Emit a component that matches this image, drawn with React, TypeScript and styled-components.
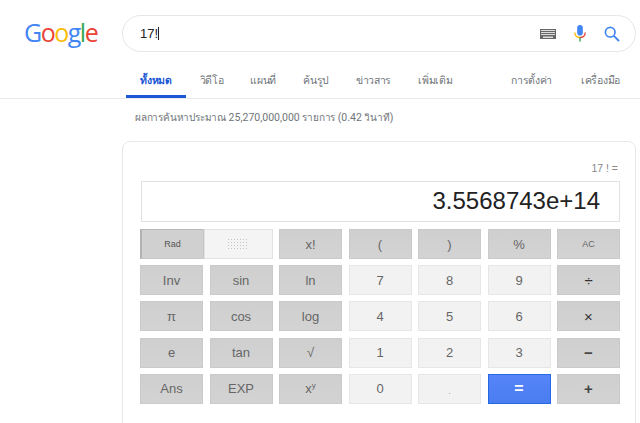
import React from 'react'
import styled, { createGlobalStyle, css } from 'styled-components'

type Tone = 'dark' | 'light' | 'blue'
type Size = 'small' | 'op' | 'heavy' | 'dot'
type Key = { label: React.ReactNode; tone: Tone; size?: Size }

const tabs = ['ทั้งหมด', 'วิดีโอ', 'แผนที่', 'ค้นรูป', 'ข่าวสาร', 'เพิ่มเติม']

const d = (label: React.ReactNode, size?: Size): Key => ({ label, tone: 'dark', size })
const l = (label: React.ReactNode, size?: Size): Key => ({ label, tone: 'light', size })

const rows: Key[][] = [
  [d('x!'), d('('), d(')'), d('%'), d('AC', 'small')],
  [d('Inv'), d('sin'), d('ln'), l('7'), l('8'), l('9'), d('÷', 'op')],
  [d('π'), d('cos'), d('log'), l('4'), l('5'), l('6'), d('×', 'op')],
  [d('e'), d('tan'), d('√'), l('1'), l('2'), l('3'), d('−', 'heavy')],
  [
    d('Ans'),
    d('EXP'),
    d(
      <span>
        x<sup>y</sup>
      </span>,
    ),
    l('0'),
    l('.', 'dot'),
    { label: '=', tone: 'blue' },
    d('+', 'heavy'),
  ],
]

const App: React.FC = () => (
  <Page>
    <GlobalStyle />
    <Header>
      <Logo>
        <Blue>G</Blue>
        <Red>o</Red>
        <Yellow>o</Yellow>
        <Blue>g</Blue>
        <Green>l</Green>
        <Red>e</Red>
      </Logo>
      <SearchBox>
        <Query>
          17!<Caret />
        </Query>
        <KeyboardIcon />
        <MicIcon />
        <SearchIcon />
      </SearchBox>
    </Header>
    <Tabs>
      {tabs.map((t, i) => (
        <Tab key={t} active={i === 0}>
          {t}
        </Tab>
      ))}
      <TabTools>
        <ToolLink>การตั้งค่า</ToolLink>
        <ToolLink>เครื่องมือ</ToolLink>
      </TabTools>
    </Tabs>
    <Stats>
      <Thai>ผลการค้นหาประมาณ</Thai> 25,270,000,000 <Thai>รายการ</Thai> (0.42 <Thai>วินาที</Thai>)
    </Stats>
    <Card>
      <Equation>17 ! =</Equation>
      <Display>3.5568743e+14</Display>
      <Keys>
        <AngleToggle>
          <RadKey>Rad</RadKey>
          <DegKey>
            <DotGrid />
          </DegKey>
        </AngleToggle>
        {rows.flat().map((k, i) => (
          <CalcKey key={i} tone={k.tone} size={k.size}>
            {k.label}
          </CalcKey>
        ))}
      </Keys>
    </Card>
  </Page>
)

const KeyboardIcon = () => (
  <IconSlot width={16} right={18}>
    <svg width="16" height="10" viewBox="0 0 16 10">
      <rect width="16" height="10" fill="#666" />
      <g fill="#ddd">
        <rect x="1" y="1" width="14" height="1" />
        <rect x="1" y="3" width="14" height="1" />
        <rect x="1" y="5" width="14" height="1" />
        <rect x="3" y="7.5" width="10" height="1.5" />
      </g>
    </svg>
  </IconSlot>
)

const MicIcon = () => (
  <IconSlot width={12} right={18}>
    <svg width="12" height="17" viewBox="0 0 12 17">
      <rect x="3.2" y="0" width="5.6" height="10.5" rx="2.8" fill="#4285f4" />
      <path d="M.8 7.5c0 3 2.2 5 5.2 5" fill="none" stroke="#fbbc05" strokeWidth="1.4" />
      <path d="M11.2 7.5c0 3-2.2 5-5.2 5" fill="none" stroke="#ea4335" strokeWidth="1.4" />
      <rect x="5.3" y="12.5" width="1.4" height="4" fill="#34a853" />
    </svg>
  </IconSlot>
)

const SearchIcon = () => (
  <IconSlot width={16} right={0}>
    <svg width="16" height="16" viewBox="0 0 16 16">
      <circle cx="6.2" cy="6.2" r="4.8" fill="none" stroke="#4285f4" strokeWidth="1.7" />
      <path d="M9.8 9.8L15 15" stroke="#4285f4" strokeWidth="1.9" />
    </svg>
  </IconSlot>
)

const GlobalStyle = createGlobalStyle`
  html, body {
    margin: 0;
    padding: 0;
    background: #fff;
    font-family: Roboto, "Noto Sans", Arial, sans-serif;
  }
`

const Page = styled.div`
  width: 640px;
  height: 423px;
  overflow: hidden;
  background: #fff;
`

const Header = styled.div`
  display: flex;
  align-items: flex-start;
  padding-top: 15px;
`

const Logo = styled.div`
  width: 98px;
  padding-left: 24px;
  font-family: "Open Sans", sans-serif;
  font-size: 25px;
  line-height: 34px;
  letter-spacing: -1.5px;
`

const Blue = styled.span`
  color: #4285f4;
`
const Red = styled.span`
  color: #ea4335;
`
const Yellow = styled.span`
  color: #fbbc05;
`
const Green = styled.span`
  color: #34a853;
`

const SearchBox = styled.div`
  width: 514px;
  height: 37px;
  box-sizing: border-box;
  border: 1px solid #e4e6e9;
  border-radius: 19px;
  display: flex;
  align-items: center;
  padding: 0 15px 0 17px;
`

const Query = styled.div`
  flex: 1;
  display: flex;
  align-items: center;
  font-family: "Liberation Sans", Arial, sans-serif;
  font-size: 13px;
  color: #222;
`

const Caret = styled.span`
  width: 1px;
  height: 13px;
  background: #222;
`

const IconSlot = styled.div<{ width: number; right: number }>`
  width: ${p => p.width}px;
  margin-right: ${p => p.right}px;
  display: flex;
  align-items: center;
`

const Tabs = styled.div`
  display: flex;
  height: 46px;
  padding-left: 126px;
  border-bottom: 1px solid #ebebeb;
`

const Tab = styled.div<{ active?: boolean }>`
  height: 46px;
  box-sizing: border-box;
  padding: 19px 13.5px 0;
  font-size: 10.5px;
  letter-spacing: -0.3px;
  line-height: 20px;
  color: #70757a;
  white-space: nowrap;
  ${p =>
    p.active &&
    css`
      width: 60px;
      padding: 19px 0 0;
      text-align: center;
      color: #1a56d6;
      font-weight: 700;
      border-bottom: 3px solid #1a56d6;
    `}
`

const TabTools = styled.div`
  margin-left: auto;
  display: flex;
  gap: 29px;
  padding: 19px 20px 0 0;
`

const ToolLink = styled.div`
  font-size: 10.5px;
  letter-spacing: -0.3px;
  line-height: 20px;
  color: #70757a;
  white-space: nowrap;
`

const Stats = styled.div`
  padding: 9px 0 0 135px;
  height: 42px;
  box-sizing: border-box;
  font-size: 10.5px;
  line-height: 20px;
  color: #70757a;
`

const Thai = styled.span`
  font-size: 10px;
  letter-spacing: -0.2px;
`

const Card = styled.div`
  width: 514px;
  height: 320px;
  margin-left: 122px;
  box-sizing: border-box;
  border: 1px solid #e8e8e8;
  border-radius: 8px;
  padding: 19px 15px 0 17px;
  font-family: "Liberation Sans", Arial, sans-serif;
`

const Equation = styled.div`
  text-align: right;
  padding-right: 2px;
  font-size: 10.5px;
  line-height: 14px;
  color: #878787;
`

const Display = styled.div`
  height: 41px;
  margin: 6px 0 7px 1px;
  box-sizing: border-box;
  border: 1px solid #e2e2e2;
  padding-right: 19px;
  text-align: right;
  font-size: 24px;
  line-height: 37px;
  color: #222;
`

const Keys = styled.div`
  display: grid;
  grid-template-columns: repeat(7, 63px);
  grid-auto-rows: 30px;
  column-gap: 6.5px;
  row-gap: 6.2px;
`

const AngleToggle = styled.div`
  grid-column: span 2;
  display: flex;
`

const RadKey = styled.div`
  width: 64px;
  box-sizing: border-box;
  display: flex;
  align-items: center;
  justify-content: center;
  background: #d0d0d0;
  border: 1px solid #c6c6c6;
  border-left: 2px solid #b2b2b2;
  border-top: 1px solid #b8b8b8;
  font-size: 9px;
  color: #555;
`

const DegKey = styled.div`
  flex: 1;
  box-sizing: border-box;
  display: flex;
  align-items: center;
  justify-content: center;
  background: #f4f4f4;
  border: 1px solid #e2e2e2;
`

const DotGrid = styled.div`
  width: 22px;
  height: 12px;
  background-image: radial-gradient(circle, #c4c4c4 0.7px, transparent 0.8px);
  background-size: 3px 3px;
`

const toneStyles = {
  dark: css`
    background: linear-gradient(#cfcfcf, #d3d3d3);
    border: 1px solid #cacaca;
    color: #666;
    font-size: 13px;
  `,
  light: css`
    background: #f2f2f2;
    border: 1px solid #e6e6e6;
    color: #666;
    font-size: 13px;
  `,
  blue: css`
    background: linear-gradient(#5585f8, #4a7df0);
    border: 1px solid #2468e6;
    color: #fff;
    font-size: 16px;
    font-weight: 700;
  `,
}

const sizeStyles = {
  small: css`
    font-size: 9px;
  `,
  op: css`
    font-size: 15px;
    color: #333;
  `,
  heavy: css`
    font-size: 15px;
    font-weight: 700;
    color: #444;
  `,
  dot: css`
    font-size: 9px;
    padding-top: 5px;
    color: #999;
  `,
}

const CalcKey = styled.div<{ tone: Tone; size?: Size }>`
  box-sizing: border-box;
  display: flex;
  align-items: center;
  justify-content: center;
  ${p => toneStyles[p.tone]}
  ${p => p.size && sizeStyles[p.size]}
  sup {
    font-size: 8px;
    line-height: 0;
  }
`

export default App
